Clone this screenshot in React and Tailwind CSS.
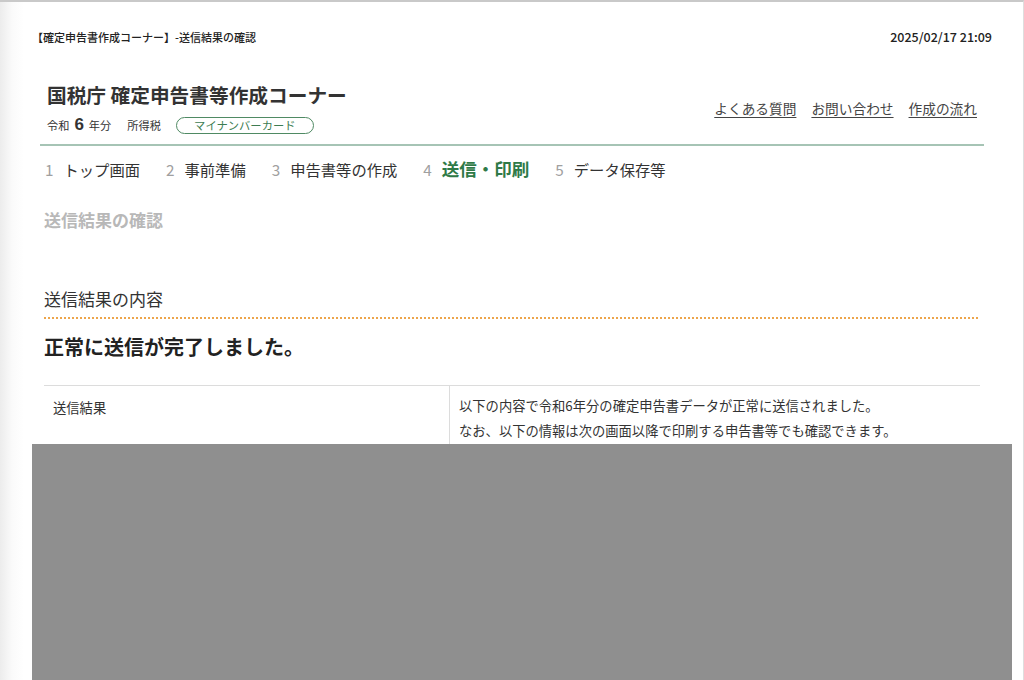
export default function App() {
  const steps = [
    { n: "1", t: "トップ画面" },
    { n: "2", t: "事前準備" },
    { n: "3", t: "申告書等の作成" },
    { n: "4", t: "送信・印刷", active: true },
    { n: "5", t: "データ保存等" },
  ];
  return (
    <div
      className="w-[1024px] h-[680px] overflow-hidden flex flex-col border-t-2 border-[#c9c9c9] border-r border-r-[#dedede] bg-[linear-gradient(to_right,#ececec,#fafafa_12px,#ffffff_24px)] text-[#333]"
      style={{ fontFamily: '"Noto Sans CJK JP", "Noto Sans", sans-serif' }}
    >
      {/* window title bar */}
      <div className="mt-[27px] ml-[32px] mr-[31px] h-[16px] flex items-center justify-between">
        <span className="text-[11px] leading-[16px] font-medium text-[#222]">
          【確定申告書作成コーナー】-送信結果の確認
        </span>
        <span className="text-[12.5px] leading-[16px] font-medium text-[#222]">2025/02/17 21:09</span>
      </div>

      {/* header */}
      <div className="mt-[36px] ml-[40px] w-[944px] px-[7px] pb-[9px] border-b-2 border-[#a6c4b5] flex items-center justify-between">
        <div className="flex flex-col">
          <div className="text-[19.7px] leading-[28px] font-bold text-[#333]">国税庁 確定申告書等作成コーナー</div>
          <div className="mt-[6px] h-[20px] flex items-center text-[11.2px] text-[#333]">
            <span>令和</span>
            <span className="mx-[5px] text-[17px] font-bold leading-[20px]" style={{ fontFamily: '"Liberation Sans", Arial, sans-serif' }}>6</span>
            <span>年分</span>
            <span className="ml-[16px]">所得税</span>
            <span className="ml-[15px] h-[17px] w-[138px] flex items-center justify-center rounded-full border border-[#4f8a63] text-[11.3px] text-[#3d7c52]">
              マイナンバーカード
            </span>
          </div>
        </div>
        <div className="flex items-center gap-[15px] text-[13.7px] text-[#444]">
          <span className="underline underline-offset-[3px]">よくある質問</span>
          <span className="underline underline-offset-[3px]">お問い合わせ</span>
          <span className="underline underline-offset-[3px]">作成の流れ</span>
        </div>
      </div>

      {/* steps */}
      <div className="mt-[11px] ml-[45px] h-[24px] flex items-center gap-[26px]">
        {steps.map((s) => (
          <div key={s.n} className="flex items-center gap-[10px]">
            <span className="text-[15.3px] text-[#a0a0a0]">{s.n}</span>
            {s.active ? (
              <span className="text-[17.5px] font-bold text-[#2f7a47]">{s.t}</span>
            ) : (
              <span className="text-[15.3px] text-[#333]">{s.t}</span>
            )}
          </div>
        ))}
      </div>

      {/* page title */}
      <div className="mt-[27px] ml-[44px] text-[17px] leading-[24px] font-bold text-[#b8b8b8]">送信結果の確認</div>

      {/* section */}
      <div className="mt-[55px] ml-[44px] w-[936px]">
        <div className="text-[17px] leading-[24px] pb-[6px]">送信結果の内容</div>
        <div className="h-[2px] bg-[repeating-linear-gradient(to_right,#eda54b_0_2px,transparent_2px_4px)]" />
        <div className="mt-[14px] text-[20px] leading-[28px] font-bold text-[#222]">正常に送信が完了しました。</div>
        <div className="mt-[24px] border-t border-[#dcdcdc] h-[59px] flex text-[13.3px] text-[#333]">
          <div className="w-[406px] pl-[9px] pt-[9px] leading-[25px] border-r border-[#dcdcdc]">送信結果</div>
          <div className="pl-[9px] pt-[7px] leading-[25px]">
            <div>以下の内容で令和6年分の確定申告書データが正常に送信されました。</div>
            <div>なお、以下の情報は次の画面以降で印刷する申告書等でも確認できます。</div>
          </div>
        </div>
      </div>

      {/* redacted area */}
      <div className="ml-[32px] w-[980px] flex-1 bg-[#8f8f8f]" />
    </div>
  );
}
